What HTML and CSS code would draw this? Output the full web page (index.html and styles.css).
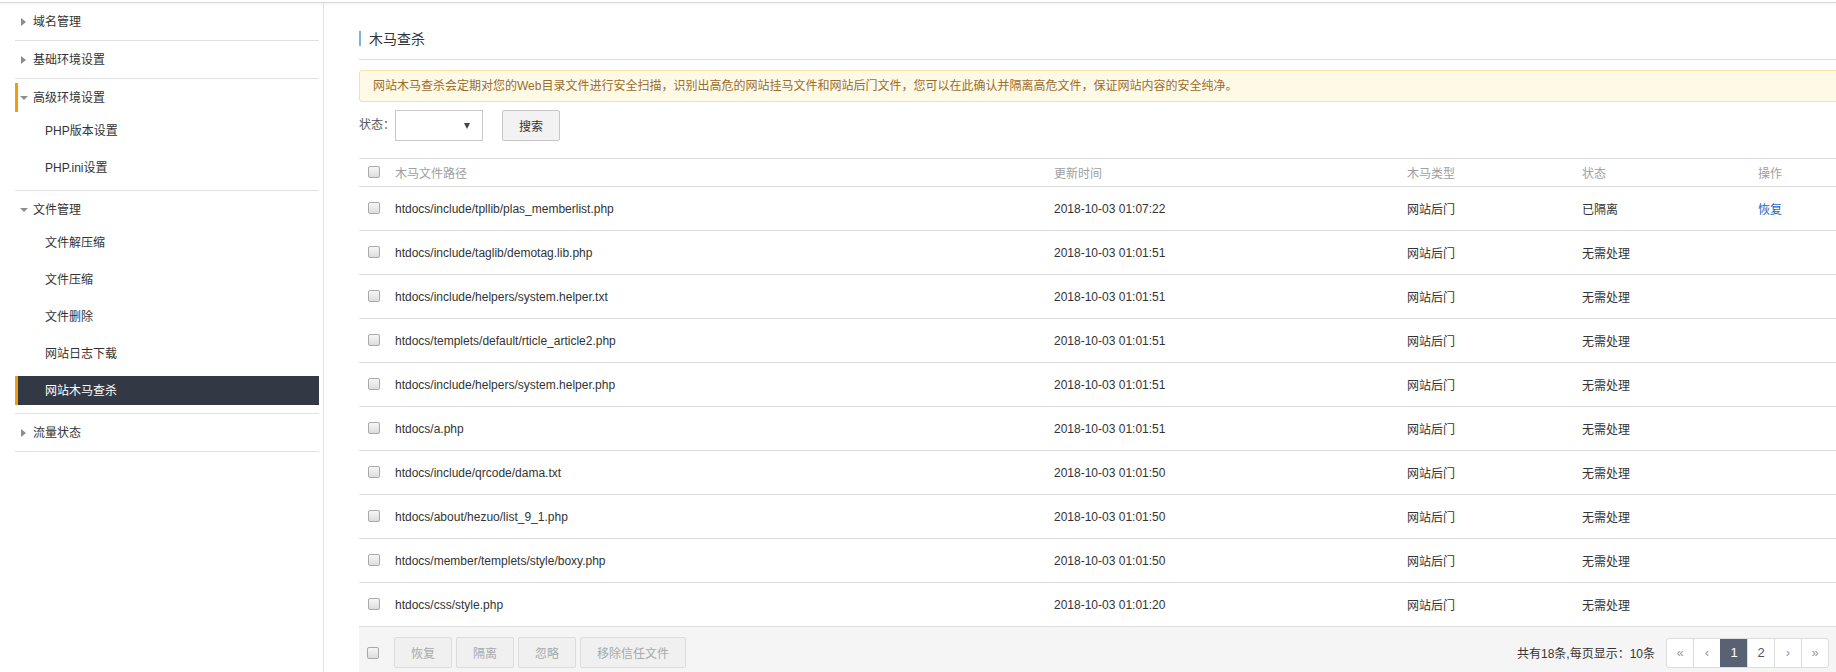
FILE: index.html
```html
<!DOCTYPE html>
<html lang="zh-CN">
<head>
<meta charset="utf-8">
<title>木马查杀</title>
<link rel="stylesheet" href="styles.css">
</head>
<body>
<div class="topbar"></div>
<div class="layout">
  <aside class="sidebar">
    <div class="group">
      <div class="ghead"><div class="gin"><span class="tri tri-right"></span>域名管理</div></div>
    </div>
    <div class="group">
      <div class="ghead"><div class="gin"><span class="tri tri-right"></span>基础环境设置</div></div>
    </div>
    <div class="group open">
      <div class="ghead"><div class="gin mark"><span class="tri tri-down"></span>高级环境设置</div></div>
      <div class="sub">PHP版本设置</div>
      <div class="sub">PHP.ini设置</div>
    </div>
    <div class="group open">
      <div class="ghead"><div class="gin"><span class="tri tri-down"></span>文件管理</div></div>
      <div class="sub">文件解压缩</div>
      <div class="sub">文件压缩</div>
      <div class="sub">文件删除</div>
      <div class="sub">网站日志下载</div>
      <div class="sub active">网站木马查杀</div>
    </div>
    <div class="group">
      <div class="ghead"><div class="gin"><span class="tri tri-right"></span>流量状态</div></div>
    </div>
  </aside>
  <main class="main">
    <div class="content">
      <div class="title-wrap"><h2 class="title">木马查杀</h2></div>
      <div class="alert">网站木马查杀会定期对您的Web目录文件进行安全扫描，识别出高危的网站挂马文件和网站后门文件，您可以在此确认并隔离高危文件，保证网站内容的安全纯净。</div>
      <div class="filter">
        <span class="flabel">状态：</span>
        <div class="select"><span class="arrow"></span></div>
        <button class="btn">搜索</button>
      </div>
      <div class="table">
        <div class="row head">
          <div class="c cbc"><span class="cb"></span></div>
          <div class="c">木马文件路径</div>
          <div class="c">更新时间</div>
          <div class="c">木马类型</div>
          <div class="c">状态</div>
          <div class="c">操作</div>
        </div>
        <div class="row">
          <div class="c cbc"><span class="cb"></span></div>
          <div class="c">htdocs/include/tpllib/plas_memberlist.php</div>
          <div class="c">2018-10-03 01:07:22</div>
          <div class="c">网站后门</div>
          <div class="c">已隔离</div>
          <div class="c"><a class="link" href="#">恢复</a></div>
        </div>
        <div class="row">
          <div class="c cbc"><span class="cb"></span></div>
          <div class="c">htdocs/include/taglib/demotag.lib.php</div>
          <div class="c">2018-10-03 01:01:51</div>
          <div class="c">网站后门</div>
          <div class="c">无需处理</div>
          <div class="c"></div>
        </div>
        <div class="row">
          <div class="c cbc"><span class="cb"></span></div>
          <div class="c">htdocs/include/helpers/system.helper.txt</div>
          <div class="c">2018-10-03 01:01:51</div>
          <div class="c">网站后门</div>
          <div class="c">无需处理</div>
          <div class="c"></div>
        </div>
        <div class="row">
          <div class="c cbc"><span class="cb"></span></div>
          <div class="c">htdocs/templets/default/rticle_article2.php</div>
          <div class="c">2018-10-03 01:01:51</div>
          <div class="c">网站后门</div>
          <div class="c">无需处理</div>
          <div class="c"></div>
        </div>
        <div class="row">
          <div class="c cbc"><span class="cb"></span></div>
          <div class="c">htdocs/include/helpers/system.helper.php</div>
          <div class="c">2018-10-03 01:01:51</div>
          <div class="c">网站后门</div>
          <div class="c">无需处理</div>
          <div class="c"></div>
        </div>
        <div class="row">
          <div class="c cbc"><span class="cb"></span></div>
          <div class="c">htdocs/a.php</div>
          <div class="c">2018-10-03 01:01:51</div>
          <div class="c">网站后门</div>
          <div class="c">无需处理</div>
          <div class="c"></div>
        </div>
        <div class="row">
          <div class="c cbc"><span class="cb"></span></div>
          <div class="c">htdocs/include/qrcode/dama.txt</div>
          <div class="c">2018-10-03 01:01:50</div>
          <div class="c">网站后门</div>
          <div class="c">无需处理</div>
          <div class="c"></div>
        </div>
        <div class="row">
          <div class="c cbc"><span class="cb"></span></div>
          <div class="c">htdocs/about/hezuo/list_9_1.php</div>
          <div class="c">2018-10-03 01:01:50</div>
          <div class="c">网站后门</div>
          <div class="c">无需处理</div>
          <div class="c"></div>
        </div>
        <div class="row">
          <div class="c cbc"><span class="cb"></span></div>
          <div class="c">htdocs/member/templets/style/boxy.php</div>
          <div class="c">2018-10-03 01:01:50</div>
          <div class="c">网站后门</div>
          <div class="c">无需处理</div>
          <div class="c"></div>
        </div>
        <div class="row">
          <div class="c cbc"><span class="cb"></span></div>
          <div class="c">htdocs/css/style.php</div>
          <div class="c">2018-10-03 01:01:20</div>
          <div class="c">网站后门</div>
          <div class="c">无需处理</div>
          <div class="c"></div>
        </div>
      </div>
      <div class="footer">
        <span class="cb fcb"></span>
        <div class="actions">
          <button class="btn dis">恢复</button>
          <button class="btn dis">隔离</button>
          <button class="btn dis">忽略</button>
          <button class="btn dis">移除信任文件</button>
        </div>
        <div class="pinfo">共有18条,每页显示：10条</div>
        <div class="pager">
          <span class="pg arr">«</span>
          <span class="pg arr">‹</span>
          <span class="pg cur">1</span>
          <span class="pg">2</span>
          <span class="pg arr">›</span>
          <span class="pg arr">»</span>
        </div>
      </div>
    </div>
  </main>
</div>
</body>
</html>
```

FILE: styles.css
```css
html, body {
  margin: 0;
  padding: 0;
  height: 100%;
  overflow: hidden;
  background: #fff;
}
body {
  font-family: "Liberation Sans", "Noto Sans CJK SC", sans-serif;
  font-size: 12px;
  color: #333;
}
.topbar {
  height: 2px;
  border-bottom: 1px solid #d9d9d9;
  box-shadow: 0 1px 3px rgba(0,0,0,0.06);
  position: relative;
  z-index: 1;
}
.layout {
  display: flex;
  height: calc(100% - 3px);
}
/* sidebar */
.sidebar {
  width: 304px;
  flex: none;
  padding: 0 4px 0 15px;
  border-right: 1px solid #e3e3e3;
}
.group {
  border-bottom: 1px solid #e1e1e1;
}
.group.open {
  padding-bottom: 8px;
}
.ghead {
  padding: 4px 0;
}
.gin {
  height: 29px;
  line-height: 30px;
  border-left: 3px solid transparent;
  padding-left: 2px;
  display: flex;
  align-items: center;
  color: #333;
}
.gin.mark {
  border-left-color: #f59a0d;
}
.tri {
  width: 7px;
  height: 8px;
  margin-right: 6px;
  display: flex;
  align-items: center;
  justify-content: center;
  flex: none;
}
.tri::before {
  content: "";
  display: block;
  width: 0;
  height: 0;
}
.tri-right::before {
  border-top: 4px solid transparent;
  border-bottom: 4px solid transparent;
  border-left: 5px solid #8c8c8c;
}
.tri-down::before {
  border-left: 4px solid transparent;
  border-right: 4px solid transparent;
  border-top: 4px solid #8c8c8c;
}
.sub {
  height: 29px;
  line-height: 30px;
  border-left: 3px solid transparent;
  padding-left: 27px;
  margin-bottom: 8px;
  color: #333;
}
.sub:last-child {
  margin-bottom: 0;
}
.sub.active {
  background: #323945;
  border-left-color: #f59a0d;
  color: #fff;
}
/* main */
.main {
  flex: 1;
  min-width: 0;
  padding-left: 35px;
  overflow: hidden;
}
.content {
  margin-right: -4px;
}
.title-wrap {
  padding: 28px 0 13px;
  border-bottom: 1px solid #dcdcdc;
}
.title {
  margin: 0;
  font-size: 14px;
  font-weight: normal;
  line-height: 17px;
  height: 15px;
  border-left: 2px solid #7eb1e2;
  padding-left: 8px;
  color: #333;
}
.alert {
  margin-top: 10px;
  height: 30px;
  line-height: 31px;
  border: 1px solid #f8e0a2;
  background: #fffae6;
  border-radius: 3px;
  padding-left: 13px;
  color: #9a6c2e;
  white-space: nowrap;
}
.filter {
  margin-top: 8px;
  display: flex;
  align-items: center;
  height: 31px;
}
.flabel {
  width: 36px;
  color: #555;
  line-height: 33px;
}
.select {
  width: 86px;
  height: 29px;
  border: 1px solid #c8c8c8;
  background: #fff;
  display: flex;
  align-items: center;
  justify-content: flex-end;
}
.arrow {
  width: 0;
  height: 0;
  border-left: 3.5px solid transparent;
  border-right: 3.5px solid transparent;
  border-top: 6px solid #444;
  margin-right: 12px;
}
.btn {
  font-family: inherit;
  font-size: 12px;
  height: 31px;
  padding: 0 16px;
  border: 1px solid #c6c6c6;
  background: #f2f2f2;
  color: #333;
  border-radius: 2px;
  margin-left: 19px;
}
/* table */
.table {
  margin-top: 17px;
  border-top: 1px solid #dedede;
}
.row {
  display: grid;
  grid-template-columns: 36px 659px 353px 175px 176px 1fr;
  height: 43px;
  align-items: center;
  border-bottom: 1px solid #dedede;
}
.row.head {
  height: 27px;
  color: #a0a0a0;
}
.cbc {
  padding-left: 9px;
  display: flex;
  align-items: center;
}
.cb {
  display: block;
  width: 10px;
  height: 10px;
  border: 1px solid #a9a9a9;
  border-radius: 2px;
  background: linear-gradient(#f6f6f6, #dddddd);
  margin-top: -2px;
}
.link {
  color: #1f63c9;
  text-decoration: none;
}
/* footer */
.footer {
  background: #f5f5f5;
  display: flex;
  align-items: center;
  padding: 10px 11px 10px 8px;
}
.fcb {
  margin: 0 15px 0 0;
}
.actions {
  display: flex;
  gap: 4px;
}
.actions .btn {
  margin-left: 0;
}
.btn.dis {
  color: #a9a9a9;
  background: #f0f0f0;
  border-color: #dcdcdc;
}
.pinfo {
  margin-left: auto;
  margin-right: 11px;
  color: #333;
}
.pager {
  display: flex;
  height: 28px;
  border: 1px solid #dcdcdc;
  border-radius: 3px;
  background: #fff;
  overflow: hidden;
}
.pg {
  width: 26px;
  line-height: 28px;
  text-align: center;
  font-size: 13px;
  color: #555;
  border-left: 1px solid #dcdcdc;
}
.pg:first-child {
  border-left: none;
}
.pg.arr {
  color: #999;
}
.pg.cur {
  background: #586272;
  color: #fff;
  border-left-color: #586272;
}
```
